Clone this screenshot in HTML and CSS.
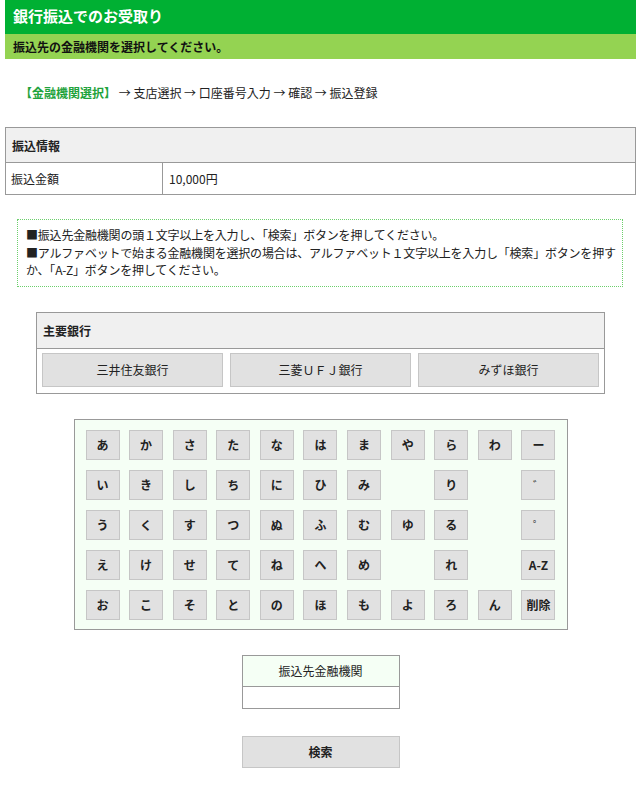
FILE: index.html
```html
<!DOCTYPE html>
<html lang="ja">
<head>
<meta charset="utf-8">
<title>銀行振込でのお受取り</title>
<link rel="stylesheet" href="styles.css">
</head>
<body>
<div class="page">
  <h1 class="title">銀行振込でのお受取り</h1>
  <div class="subtitle">振込先の金融機関を選択してください。</div>

  <p class="steps"><span class="current">【金融機関選択】</span> → 支店選択 → 口座番号入力 → 確認 → 振込登録</p>

  <table class="info">
    <tr><th colspan="2">振込情報</th></tr>
    <tr><td class="label">振込金額</td><td>10,000円</td></tr>
  </table>

  <div class="notice">
    <p>■振込先金融機関の頭１文字以上を入力し、「検索」ボタンを押してください。</p>
    <p>■アルファベットで始まる金融機関を選択の場合は、アルファベット１文字以上を入力し「検索」ボタンを押すか、「A-Z」ボタンを押してください。</p>
  </div>

  <div class="banks">
    <div class="banks-head">主要銀行</div>
    <div class="banks-row">
      <button class="bank">三井住友銀行</button>
      <button class="bank">三菱ＵＦＪ銀行</button>
      <button class="bank">みずほ銀行</button>
    </div>
  </div>

  <div class="kbd">
    <button class="key">あ</button><button class="key">か</button><button class="key">さ</button><button class="key">た</button><button class="key">な</button><button class="key">は</button><button class="key">ま</button><button class="key">や</button><button class="key">ら</button><button class="key">わ</button><button class="key">ー</button>
    <button class="key">い</button><button class="key">き</button><button class="key">し</button><button class="key">ち</button><button class="key">に</button><button class="key">ひ</button><button class="key">み</button><span class="blank"></span><button class="key">り</button><span class="blank"></span><button class="key mark">゛</button>
    <button class="key">う</button><button class="key">く</button><button class="key">す</button><button class="key">つ</button><button class="key">ぬ</button><button class="key">ふ</button><button class="key">む</button><button class="key">ゆ</button><button class="key">る</button><span class="blank"></span><button class="key mark">゜</button>
    <button class="key">え</button><button class="key">け</button><button class="key">せ</button><button class="key">て</button><button class="key">ね</button><button class="key">へ</button><button class="key">め</button><span class="blank"></span><button class="key">れ</button><span class="blank"></span><button class="key">A-Z</button>
    <button class="key">お</button><button class="key">こ</button><button class="key">そ</button><button class="key">と</button><button class="key">の</button><button class="key">ほ</button><button class="key">も</button><button class="key">よ</button><button class="key">ろ</button><button class="key">ん</button><button class="key">削除</button>
  </div>

  <div class="field">
    <div class="field-head">振込先金融機関</div>
    <div class="field-input"></div>
  </div>

  <button class="search">検索</button>
</div>
</body>
</html>
```
FILE: styles.css
```css
* { box-sizing: border-box; }
body {
  margin: 0;
  font-family: "Noto Sans CJK JP", "Noto Sans", sans-serif;
  font-size: 12px;
  color: #222;
  background: #fff;
}
.page { padding: 0 4px 0 5px; }
.title {
  margin: 0;
  height: 34px;
  line-height: 32px;
  padding-left: 8px;
  background: #00b033;
  color: #fff;
  font-size: 15px;
  font-weight: bold;
}
.subtitle {
  height: 25px;
  line-height: 25px;
  padding-left: 8px;
  background: #94d352;
  font-weight: bold;
  color: #111;
}
.steps {
  margin: 25px 0 0;
  padding-left: 15px;
  line-height: 18px;
}
.current { color: #1fa33c; font-weight: bold; }
.info {
  margin-top: 25px;
  width: 100%;
  border-collapse: collapse;
  border: 1px solid #999;
}
.info th {
  height: 35px;
  text-align: left;
  padding: 0 6px;
  background: #f0f0f0;
  border: 1px solid #999;
  font-weight: bold;
}
.info td {
  height: 32px;
  padding: 0 6px;
  border: 1px solid #999;
}
.info td.label { width: 157px; padding-left: 5px; }
.notice {
  margin: 24px 13px 0 12px;
  border: 1px dotted #6ccf6c;
  padding: 6px 6px 7px 8px;
  line-height: 17.5px;
  letter-spacing: -0.2px;
}
.notice p { margin: 0; }
.banks {
  margin: 25px auto 0;
  width: 569px;
  border: 1px solid #999;
}
.banks-head {
  height: 36px;
  line-height: 35px;
  padding-left: 6px;
  background: #f0f0f0;
  border-bottom: 1px solid #999;
  font-weight: bold;
}
.banks-row {
  display: grid;
  grid-template-columns: 1fr 1fr 1fr;
  column-gap: 7px;
  padding: 4px 5px 6px;
}
.bank, .key, .search {
  font-family: inherit;
  font-size: 12px;
  color: #222;
  background: #e1e1e1;
  border: 1px solid #c6c6c6;
  padding: 0;
  margin: 0;
}
.bank { height: 34px; }
.kbd {
  margin: 25px auto 0;
  width: 494px;
  background: #f5fff5;
  border: 1px solid #999;
  padding: 10px 10px 9px 11px;
  display: grid;
  grid-template-columns: repeat(11, 34px);
  grid-auto-rows: 30px;
  column-gap: 9.6px;
  row-gap: 10px;
}
.key {
  height: 30px;
  width: 34px;
  font-weight: bold;
}
.key.mark { font-weight: normal; font-size: 11px; }
.field {
  margin: 25px auto 0;
  width: 158px;
  border: 1px solid #999;
}
.field-head {
  height: 31px;
  line-height: 29px;
  text-align: center;
  background: #f5fff5;
  border-bottom: 1px solid #999;
}
.field-input { height: 21px; background: #fff; }
.search {
  display: block;
  margin: 27px auto 0;
  width: 158px;
  height: 32px;
  font-weight: bold;
}
```
